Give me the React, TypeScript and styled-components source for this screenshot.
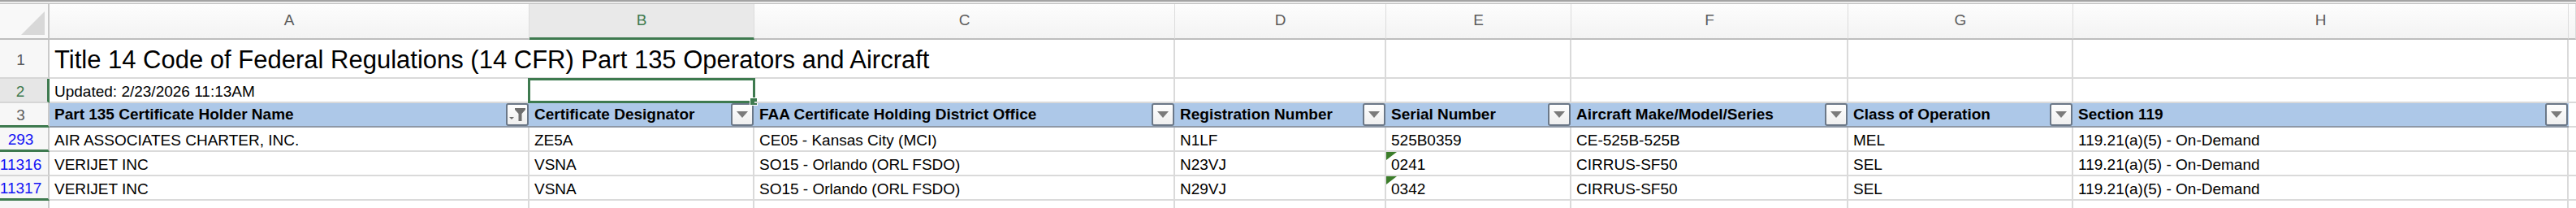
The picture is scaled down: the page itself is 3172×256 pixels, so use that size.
import React from "react";
import styled, { createGlobalStyle } from "styled-components";

const GREEN = "#3e7a4f";
const GRID = "#dadada";
const COLS = "61px 591px 277px 518px 260px 228px 341px 277px 610px 1fr";

const GlobalStyle = createGlobalStyle`
  html, body {
    margin: 0;
    padding: 0;
    background: #ffffff;
  }
  body {
    font-family: "Liberation Sans", Arial, sans-serif;
    overflow: hidden;
  }
  * {
    box-sizing: border-box;
  }
`;

const Sheet = styled.div`
  width: 3172px;
  height: 256px;
  overflow: hidden;
  background: #ffffff;
`;

const TopRule = styled.div`
  height: 5px;
  border-top: 2px solid #a3a3a3;
  border-bottom: 1px solid #c2c2c2;
  background: #ececec;
`;

const Row = styled.div<{ $height: number }>`
  display: grid;
  grid-template-columns: ${COLS};
  height: ${(p) => p.$height}px;
`;

const Corner = styled.div`
  display: flex;
  align-items: flex-end;
  justify-content: flex-end;
  padding: 0 4px 4px 0;
  background: #f8f8f8;
  border-right: 2px solid #c9c9c9;
  border-bottom: 2px solid #bdbdbd;
`;

const CornerMark = styled.div`
  width: 29px;
  height: 29px;
  background: #d8d8d8;
  clip-path: polygon(100% 0, 100% 100%, 0 100%);
`;

const ColHead = styled.div<{ $selected?: boolean }>`
  display: flex;
  align-items: center;
  justify-content: center;
  padding-bottom: 2px;
  font-size: 19px;
  color: ${(p) => (p.$selected ? GREEN : "#5c5c5c")};
  background: ${(p) => (p.$selected ? "#e9e9e9" : "linear-gradient(#fdfdfd, #f3f3f3)")};
  border-right: 1px solid #dcdcdc;
  border-bottom: ${(p) => (p.$selected ? `3px solid ${GREEN}` : "2px solid #bdbdbd")};
`;

const RowHead = styled.div<{ $selected?: boolean; $filtered?: boolean; $gap?: boolean }>`
  display: flex;
  align-items: center;
  justify-content: center;
  padding: 3px 8px 0 0;
  font-size: 19px;
  white-space: nowrap;
  color: ${(p) => (p.$selected ? GREEN : p.$filtered ? "#1414f5" : "#5c5c5c")};
  background: ${(p) => (p.$selected ? "#e6e6e6" : "#f7f7f7")};
  border-right: ${(p) => (p.$selected ? `3px solid ${GREEN}` : "2px solid #cacaca")};
  border-bottom: ${(p) => (p.$gap ? `3px solid ${GREEN}` : "2px solid #d6d6d6")};
`;

const Cell = styled.div`
  position: relative;
  display: flex;
  align-items: center;
  padding: 3px 6px 0;
  font-size: 19px;
  color: #000000;
  white-space: nowrap;
  border-right: 2px solid ${GRID};
  border-bottom: 2px solid ${GRID};
`;

const TitleCell = styled(Cell)`
  grid-column: span 3;
  font-size: 31px;
`;

const HeadCell = styled.div<{ $blank?: boolean }>`
  display: flex;
  align-items: center;
  justify-content: space-between;
  padding: 0 1px 0 6px;
  font-size: 19px;
  font-weight: 700;
  color: #000000;
  white-space: nowrap;
  background: ${(p) => (p.$blank ? "#ffffff" : "#adc8e8")};
  border-bottom: 2px solid ${(p) => (p.$blank ? GRID : "#8e98a6")};
`;

const FilterButton = styled.div`
  display: grid;
  place-items: center;
  width: 28px;
  height: 28px;
  border: 2px solid #6b7888;
  border-radius: 3px;
  background: linear-gradient(#fefefe, #efefef);
`;

const Selection = styled.div`
  position: absolute;
  inset: -1px -3px -2px -2px;
  border: 3px solid ${GREEN};
  pointer-events: none;
`;

const FillHandle = styled.span`
  position: absolute;
  right: -6px;
  bottom: -6px;
  width: 10px;
  height: 10px;
  background: ${GREEN};
  border: 1px solid #ffffff;
`;

const ErrorMark = styled.span`
  position: absolute;
  left: 0;
  top: 0;
  width: 13px;
  height: 10px;
  background: #3b7d2a;
  clip-path: polygon(0 0, 100% 0, 0 100%);
`;

const headers = [
  "Part 135 Certificate Holder Name",
  "Certificate Designator",
  "FAA Certificate Holding District Office",
  "Registration Number",
  "Serial Number",
  "Aircraft Make/Model/Series",
  "Class of Operation",
  "Section 119",
];

const records = [
  {
    num: "293",
    gap: true,
    cells: ["AIR ASSOCIATES CHARTER, INC.", "ZE5A", "CE05 - Kansas City (MCI)", "N1LF", "525B0359", "CE-525B-525B", "MEL", "119.21(a)(5) - On-Demand"],
    textSerial: false,
  },
  {
    num: "11316",
    gap: false,
    cells: ["VERIJET INC", "VSNA", "SO15 - Orlando (ORL FSDO)", "N23VJ", "0241", "CIRRUS-SF50", "SEL", "119.21(a)(5) - On-Demand"],
    textSerial: true,
  },
  {
    num: "11317",
    gap: true,
    cells: ["VERIJET INC", "VSNA", "SO15 - Orlando (ORL FSDO)", "N29VJ", "0342", "CIRRUS-SF50", "SEL", "119.21(a)(5) - On-Demand"],
    textSerial: true,
  },
];

function Arrow() {
  return (
    <svg width="14" height="8" viewBox="0 0 14 8">
      <path d="M0 0 H14 L7 8 Z" fill="#7b7b7b" />
    </svg>
  );
}

function Funnel() {
  return (
    <svg width="22" height="20" viewBox="0 0 22 20">
      <path d="M1 13 H7 L4 16 Z" fill="#6f6f6f" />
      <path d="M8 2 H21 V4 L16.5 9 V18 H12.5 V9 L8 4 Z" fill="#6f6f6f" />
    </svg>
  );
}

export default function App() {
  return (
    <Sheet>
      <GlobalStyle />
      <TopRule />

      <Row $height={44}>
        <Corner>
          <CornerMark />
        </Corner>
        {["A", "B", "C", "D", "E", "F", "G", "H", ""].map((l) => (
          <ColHead key={l || "I"} $selected={l === "B"}>
            {l}
          </ColHead>
        ))}
      </Row>

      <Row $height={48}>
        <RowHead>1</RowHead>
        <TitleCell>Title 14 Code of Federal Regulations (14 CFR) Part 135 Operators and Aircraft</TitleCell>
        {Array.from({ length: 6 }, (_, i) => (
          <Cell key={i} />
        ))}
      </Row>

      <Row $height={30}>
        <RowHead $selected>2</RowHead>
        <Cell>Updated: 2/23/2026 11:13AM</Cell>
        <Cell>
          <Selection>
            <FillHandle />
          </Selection>
        </Cell>
        {Array.from({ length: 7 }, (_, i) => (
          <Cell key={i} />
        ))}
      </Row>

      <Row $height={30}>
        <RowHead $gap>3</RowHead>
        {headers.map((h, i) => (
          <HeadCell key={h}>
            <span>{h}</span>
            <FilterButton>{i === 0 ? <Funnel /> : <Arrow />}</FilterButton>
          </HeadCell>
        ))}
        <HeadCell $blank />
      </Row>

      {records.map((r) => (
        <Row $height={30} key={r.num}>
          <RowHead $filtered $gap={r.gap}>
            {r.num}
          </RowHead>
          {r.cells.map((c, i) => (
            <Cell key={i}>
              {i === 4 && r.textSerial && <ErrorMark />}
              {c}
            </Cell>
          ))}
          <Cell />
        </Row>
      ))}

      <Row $height={30}>
        <RowHead $filtered>15536</RowHead>
        {Array.from({ length: 9 }, (_, i) => (
          <Cell key={i} />
        ))}
      </Row>
    </Sheet>
  );
}
